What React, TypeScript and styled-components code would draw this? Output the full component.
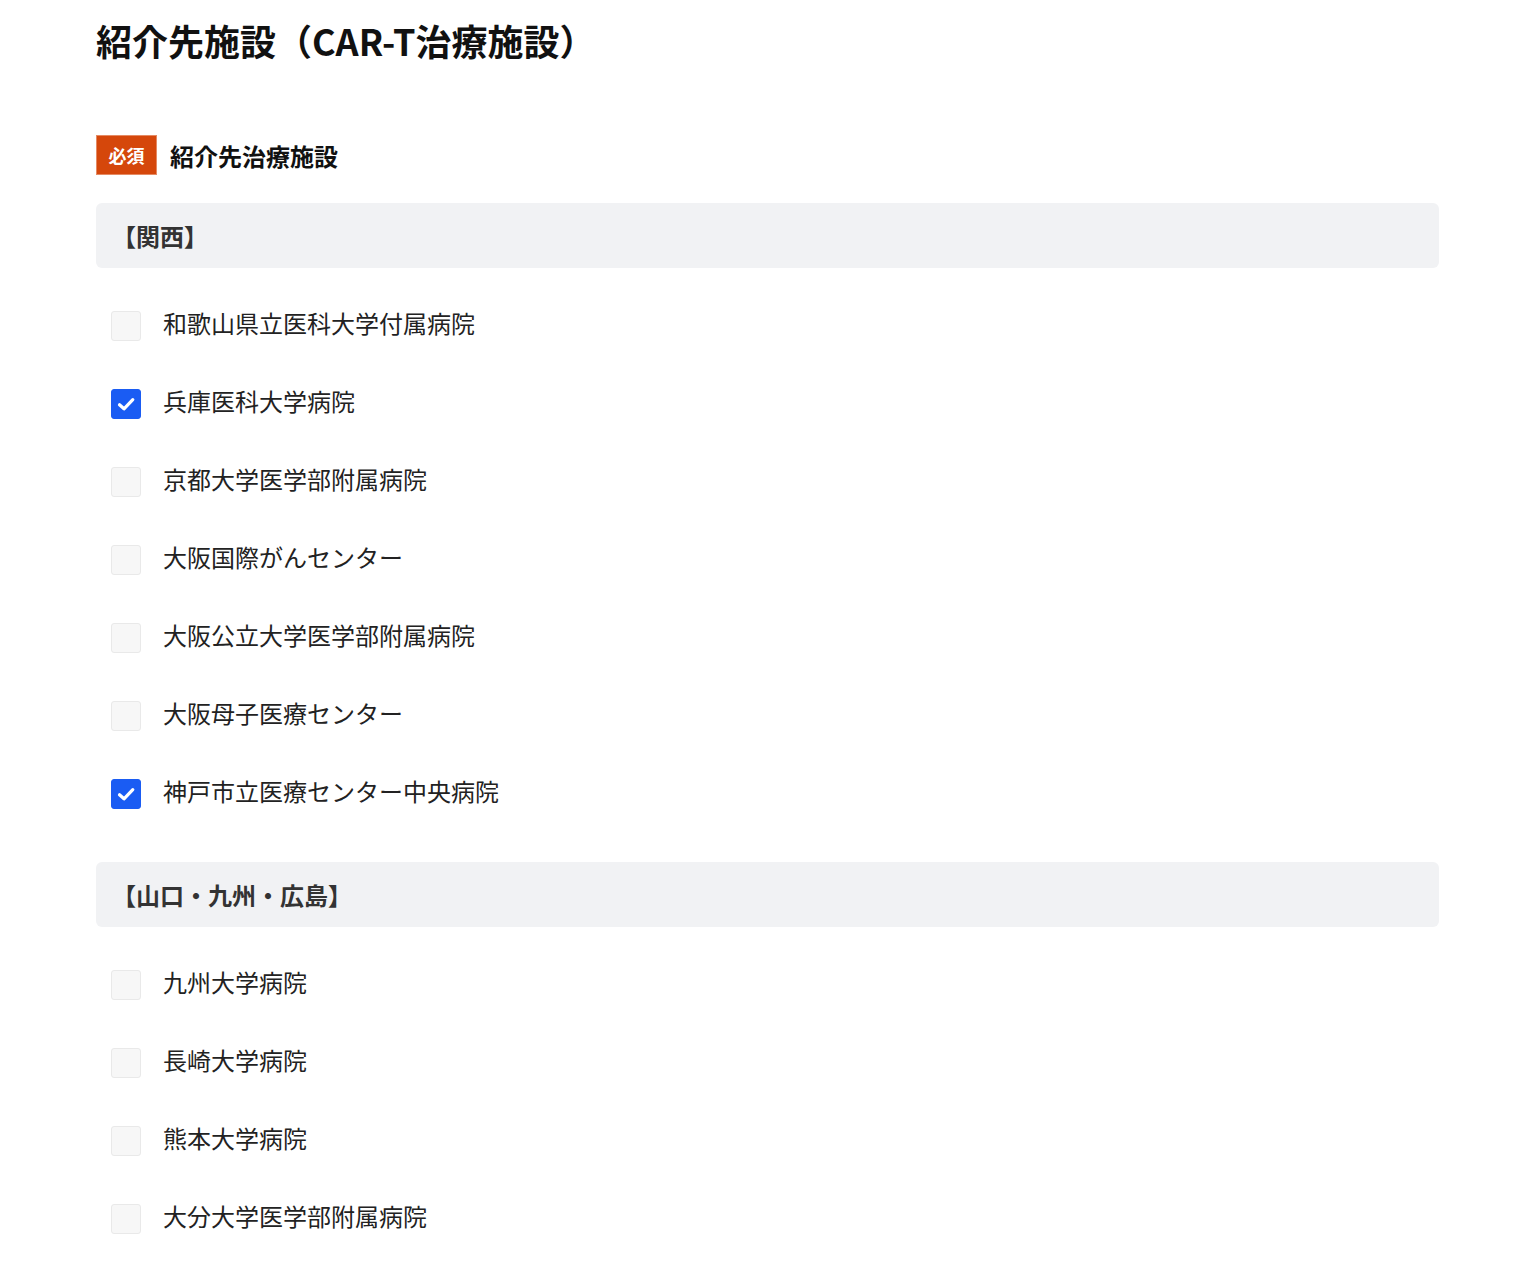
import React, { useState } from 'react';
import styled, { createGlobalStyle } from 'styled-components';

const GlobalStyle = createGlobalStyle`
  html, body {
    margin: 0;
    padding: 0;
    background: #ffffff;
  }
  body {
    font-family: "Noto Sans CJK JP", "Noto Sans", sans-serif;
    color: #222;
  }
`;

interface Facility {
  name: string;
  checked: boolean;
}

interface Region {
  title: string;
  items: Facility[];
}

const initialRegions: Region[] = [
  {
    title: '【関西】',
    items: [
      { name: '和歌山県立医科大学付属病院', checked: false },
      { name: '兵庫医科大学病院', checked: true },
      { name: '京都大学医学部附属病院', checked: false },
      { name: '大阪国際がんセンター', checked: false },
      { name: '大阪公立大学医学部附属病院', checked: false },
      { name: '大阪母子医療センター', checked: false },
      { name: '神戸市立医療センター中央病院', checked: true },
    ],
  },
  {
    title: '【山口・九州・広島】',
    items: [
      { name: '九州大学病院', checked: false },
      { name: '長崎大学病院', checked: false },
      { name: '熊本大学病院', checked: false },
      { name: '大分大学医学部附属病院', checked: false },
    ],
  },
];

const Page = styled.div`
  padding: 14px 96px 40px 96px;
  width: 1343px;
`;

const Title = styled.h1`
  margin: 0;
  font-size: 36px;
  font-weight: 700;
  line-height: 52px;
  color: #111;
`;

const FieldHeader = styled.div`
  display: flex;
  align-items: center;
  gap: 13px;
  margin-top: 69px;
`;

const RequiredBadge = styled.span`
  display: inline-flex;
  align-items: center;
  justify-content: center;
  width: 61px;
  height: 40px;
  box-sizing: border-box;
  background: #d5470b;
  border: 1px solid #e58a63;
  color: #fff;
  font-size: 18px;
  font-weight: 700;
`;

const FieldLabel = styled.span`
  font-size: 24px;
  font-weight: 700;
  color: #111;
`;

const Section = styled.section`
  margin-top: 28px;
  & + & {
    margin-top: 30px;
  }
`;

const RegionHeader = styled.div`
  height: 65px;
  display: flex;
  align-items: center;
  padding-left: 16px;
  background: #f1f2f4;
  border-radius: 6px;
  font-size: 24px;
  font-weight: 700;
  color: #333;
`;

const List = styled.ul`
  list-style: none;
  margin: 0;
  padding: 18px 0 0 15px;
`;

const Row = styled.li`
  height: 78px;
  display: flex;
  align-items: center;
`;

const Label = styled.label`
  display: flex;
  align-items: center;
  gap: 22px;
  cursor: pointer;
  font-size: 24px;
  line-height: 30px;
  color: #222;
`;

const LabelText = styled.span`
  position: relative;
  top: -2px;
`;

const HiddenInput = styled.input`
  position: absolute;
  opacity: 0;
  width: 0;
  height: 0;
`;

const Box = styled.span<{ $checked: boolean }>`
  width: 30px;
  height: 30px;
  flex-shrink: 0;
  margin-top: 1px;
  box-sizing: border-box;
  border-radius: 3px;
  display: inline-flex;
  align-items: center;
  justify-content: center;
  background: ${p => (p.$checked ? '#1a5cf3' : '#f7f7f7')};
  border: 1px solid ${p => (p.$checked ? '#1a5cf3' : '#e9e9e9')};
`;

const CheckIcon = () => (
  <svg width="20" height="20" viewBox="0 0 20 20" aria-hidden="true">
    <path d="M3.5 10.8 L8 14.8 L16.8 5.6" fill="none" stroke="#fff" strokeWidth="3.2" strokeLinecap="round" strokeLinejoin="round" />
  </svg>
);

const App: React.FC = () => {
  const [regions, setRegions] = useState<Region[]>(initialRegions);

  const toggle = (r: number, i: number) => {
    setRegions(prev =>
      prev.map((region, ri) =>
        ri !== r
          ? region
          : {
              ...region,
              items: region.items.map((item, ii) => (ii === i ? { ...item, checked: !item.checked } : item)),
            }
      )
    );
  };

  return (
    <>
      <GlobalStyle />
      <Page>
        <Title>紹介先施設（CAR-T治療施設）</Title>
        <FieldHeader>
          <RequiredBadge>必須</RequiredBadge>
          <FieldLabel>紹介先治療施設</FieldLabel>
        </FieldHeader>
        {regions.map((region, r) => (
          <Section key={region.title}>
            <RegionHeader>{region.title}</RegionHeader>
            <List>
              {region.items.map((item, i) => (
                <Row key={item.name}>
                  <Label>
                    <HiddenInput type="checkbox" checked={item.checked} onChange={() => toggle(r, i)} />
                    <Box $checked={item.checked}>{item.checked && <CheckIcon />}</Box>
                    <LabelText>{item.name}</LabelText>
                  </Label>
                </Row>
              ))}
            </List>
          </Section>
        ))}
      </Page>
    </>
  );
};

export default App;
